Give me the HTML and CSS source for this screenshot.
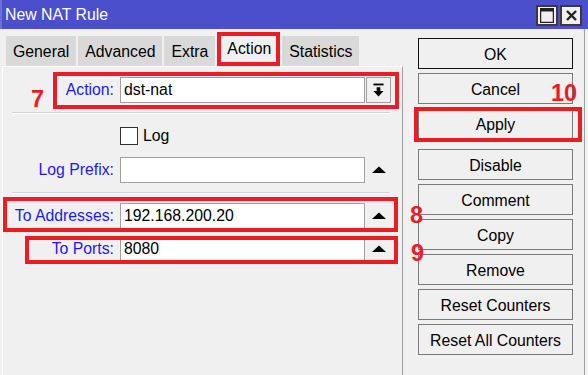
FILE: index.html
```html
<!DOCTYPE html>
<html lang="en">
    <head>
        <title>New NAT Rule</title>
        <meta charset="utf-8">
        <link rel="stylesheet" href="styles.css">
    </head>

    <body>
        <div id="janela">
            <div class="titulo">
                <span class="titulo-texto">New NAT Rule</span>
                <div class="titulo-botoes">
                    <span class="tb-botao">
                        <svg width="14" height="15" viewBox="0 0 14 15"><rect x="0.5" y="0.5" width="13" height="14" fill="none" stroke="#222" stroke-width="1.5"/><rect x="0" y="0" width="14" height="3.5" fill="#222"/></svg>
                    </span>
                    <span class="tb-botao">
                        <svg width="11" height="11" viewBox="0 0 11 11"><path d="M1 1 L10 10 M10 1 L1 10" stroke="#222" stroke-width="2.4"/></svg>
                    </span>
                </div>
            </div>

            <div class="corpo">
                <div class="esquerda">
                    <div class="abas">
                        <span class="aba">General</span>
                        <span class="aba">Advanced</span>
                        <span class="aba">Extra</span>
                        <span class="aba ativa">Action</span>
                        <span class="aba">Statistics</span>
                    </div>

                    <div class="painel">
                        <div class="linha">
                            <span class="rotulo">Action:</span>
                            <span class="campo">dst-nat</span>
                            <span class="seta caixa">
                                <svg width="25" height="24" viewBox="0 0 25 24"><rect x="7" y="5" width="11" height="2" fill="#000"/><rect x="10.5" y="9" width="4" height="4" fill="#000"/><path d="M7 13 H18 L12.5 19 Z" fill="#000"/></svg>
                            </span>
                        </div>
                        <div class="separador"></div>

                        <div class="linha linha-log">
                            <span class="rotulo"></span>
                            <span class="check"></span>
                            <span class="check-texto">Log</span>
                        </div>

                        <div class="linha">
                            <span class="rotulo">Log Prefix:</span>
                            <span class="campo"></span>
                            <span class="seta">
                                <svg width="25" height="26" viewBox="0 0 25 26"><path d="M6 16 H20 L13 9.5 Z" fill="#000"/></svg>
                            </span>
                        </div>
                        <div class="separador"></div>

                        <div class="linha">
                            <span class="rotulo">To Addresses:</span>
                            <span class="campo">192.168.200.20</span>
                            <span class="seta">
                                <svg width="25" height="26" viewBox="0 0 25 26"><path d="M6 16 H20 L13 9.5 Z" fill="#000"/></svg>
                            </span>
                        </div>

                        <div class="linha linha-portas">
                            <span class="rotulo">To Ports:</span>
                            <span class="campo">8080</span>
                            <span class="seta">
                                <svg width="25" height="26" viewBox="0 0 25 26"><path d="M6 16 H20 L13 9.5 Z" fill="#000"/></svg>
                            </span>
                        </div>
                    </div>
                </div>

                <div class="lateral">
                    <button class="botao padrao">OK</button>
                    <button class="botao">Cancel</button>
                    <button class="botao grupo-fim">Apply</button>
                    <button class="botao">Disable</button>
                    <button class="botao">Comment</button>
                    <button class="botao">Copy</button>
                    <button class="botao">Remove</button>
                    <button class="botao">Reset Counters</button>
                    <button class="botao">Reset All Counters</button>
                </div>
            </div>

            <!-- marcacoes em vermelho por cima da janela -->
            <div class="marca m-aba"></div>
            <div class="marca m-action"></div>
            <div class="marca m-enderecos"></div>
            <div class="marca m-portas"></div>
            <div class="marca m-apply"></div>

            <span class="numero n7">7</span>
            <span class="numero n8">8</span>
            <span class="numero n9">9</span>
            <span class="numero n10">10</span>
        </div>
    </body>
</html>
```

FILE: styles.css
```css
*, *::before, *::after{
    box-sizing: border-box;
}

body{
    margin: 0;
    padding: 0;
    background-color: #f0f0f0;
    font-family: "Liberation Sans", Arial, sans-serif;
    font-size: 15.8px;
    overflow: hidden;
}

#janela{
    position: relative;
    width: 588px;
    height: 375px;
}

.titulo{
    height: 29px;
    background-color: #4c4fcb;
    border-left: 2px solid #6d70d6;
    display: flex;
    align-items: center;
    padding-left: 3px;
    color: white;
}

.titulo-botoes{
    margin-left: auto;
    margin-right: 6px;
    display: flex;
    gap: 2px;
    margin-top: 2px;
}

.tb-botao{
    width: 22px;
    height: 21px;
    border: 2px solid #3a3a3a;
    background-color: #f0f0f0;
    display: flex;
    align-items: center;
    justify-content: center;
}

.corpo{
    display: flex;
    height: 346px;
}

.esquerda{
    margin-left: 2px;
    width: 401px;
    display: flex;
    flex-direction: column;
}

.abas{
    height: 37px;
    display: flex;
    align-items: flex-end;
    padding-left: 4px;
    gap: 2px;
}

.aba{
    height: 30px;
    padding: 2px 7px 0 7px;
    background-color: #d9d9d9;
    display: flex;
    align-items: center;
    color: #000;
}

.aba.ativa{
    height: 35px;
    margin-bottom: -1px;
    padding: 0 9px 2px 9px;
    background-color: #f0f0f0;
    border-left: 1px solid #fff;
    position: relative;
}

.painel{
    flex: 1;
    border-top: 1px solid #fff;
    border-left: 1px solid #fff;
    border-right: 1px solid #a0a0a0;
    padding-top: 10px;
}

.linha{
    display: flex;
    align-items: center;
    height: 26px;
}

.rotulo{
    width: 111px;
    margin-right: 6px;
    text-align: right;
    color: #1a1af0;
}

.campo{
    width: 245px;
    height: 26px;
    border: 1px solid #a0a0a0;
    background-color: #fff;
    padding-left: 3px;
    display: flex;
    align-items: center;
}

.seta{
    width: 25px;
    height: 26px;
    margin-left: 1px;
    display: flex;
    align-items: center;
    justify-content: center;
}

.seta.caixa{
    border: 1px solid #a0a0a0;
}

.separador{
    margin: 9px 12px 0 9px;
    border-top: 1px solid #d2d2d2;
    border-bottom: 1px solid #fff;
}

.linha-log{
    margin-top: 9px;
    margin-bottom: 8px;
}

.check{
    width: 18px;
    height: 18px;
    border: 1px solid #333;
    background-color: #fff;
}

.check-texto{
    margin-left: 5px;
}

.separador + .linha{
    margin-top: 9px;
}

.separador + .linha-log{
    margin-top: 9px;
}

.linha-portas{
    margin-top: 7px;
}

.lateral{
    width: 182px;
    border-right: 1px solid #a0a0a0;
    padding: 9px 0 0 15px;
    display: flex;
    flex-direction: column;
}

.botao{
    width: 155px;
    height: 31px;
    margin-bottom: 4px;
    border: 1px solid #7a7a7a;
    background-color: #f0f0f0;
    font-family: "Liberation Sans", Arial, sans-serif;
    font-size: 15.8px;
    color: #000;
    padding: 2px 0 0 0;
}

.botao.padrao{
    border-color: #111;
}

.botao.grupo-fim{
    margin-bottom: 10px;
}

.marca{
    position: absolute;
    border: 4px solid #ed1c24;
}

.m-aba{
    left: 217px;
    top: 32px;
    width: 63px;
    height: 34px;
}

.m-action{
    left: 53px;
    top: 72px;
    width: 346px;
    height: 37px;
}

.m-enderecos{
    left: 3px;
    top: 197px;
    width: 395px;
    height: 35px;
}

.m-portas{
    left: 25px;
    top: 236px;
    width: 373px;
    height: 28px;
}

.m-apply{
    left: 414px;
    top: 107px;
    width: 168px;
    height: 35px;
}

.numero{
    position: absolute;
    color: #ed1c24;
    font-weight: bold;
    font-size: 23.5px;
    line-height: 24px;
}

.n7{
    left: 31px;
    top: 87px;
}

.n10{
    left: 551px;
    top: 81px;
}

.n8{
    left: 410px;
    top: 203px;
}

.n9{
    left: 411px;
    top: 241px;
}
```
